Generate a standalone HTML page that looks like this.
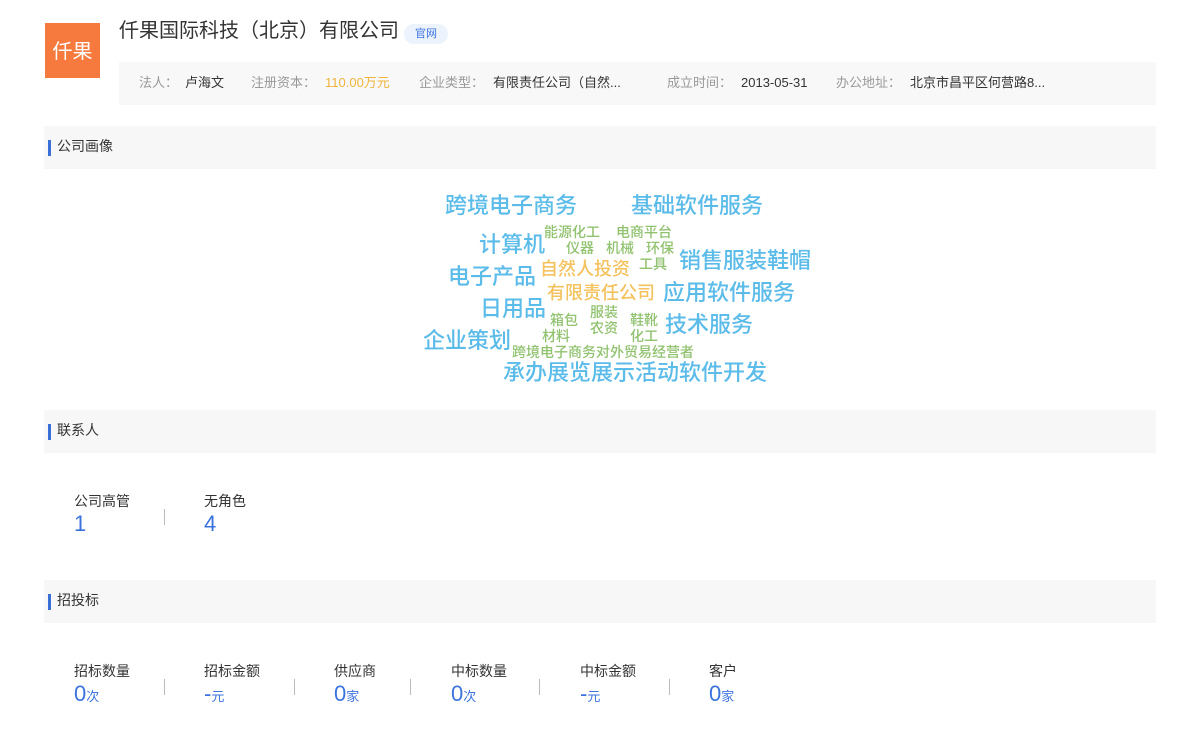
<!DOCTYPE html>
<html><head><meta charset="utf-8"><style>
*{margin:0;padding:0;box-sizing:border-box}
body{width:1200px;height:752px;background:#fff;position:relative;overflow:hidden;font-family:"Liberation Sans","Noto Sans CJK SC",sans-serif;color:#333}
.a{position:absolute;white-space:nowrap;line-height:1}
.logo{position:absolute;left:45px;top:23px;width:55px;height:55px;background:#f67a3e;color:#fff;font-size:20px;line-height:58px;text-align:center}
.info{position:absolute;left:119px;top:62px;width:1037px;height:43px;background:#f8f8f9}
.sec{position:absolute;left:44px;width:1112px;height:43px;background:#f7f7f7}
.sec span{position:absolute;left:4px;top:14px;width:3px;height:16px;background:#3a6fd8}
.sec b{position:absolute;left:13px;top:12px;font-weight:normal;font-size:14px;color:#333;line-height:16px}
.lb{color:#999;font-size:13px}
.vl{color:#333;font-size:13px}
.bl{color:#5bbbe9;font-weight:500}.gr{color:#91c26f;font-weight:500}.or{color:#f4c25e;font-weight:500}
.sl{position:absolute;font-size:14px;color:#333;line-height:1}
.sn{position:absolute;font-size:22px;color:#3b73de;line-height:1}
.sn small{font-size:13px}
.dv{position:absolute;width:1px;height:16px;background:#bbb}
</style></head><body>
<div class="logo">仟果</div>
<div class="a" style="left:119px;top:21px;font-size:20px;color:#333">仟果国际科技（北京）有限公司</div>
<div class="a" style="left:404px;top:24px;width:44px;height:20px;border-radius:10px;background:#edf3fd;color:#3b73de;font-size:11px;line-height:20px;text-align:center">官网</div>
<div class="info"></div>
<div class="a lb" style="left:139px;top:76px">法人：</div>
<div class="a vl" style="left:185px;top:76px">卢海文</div>
<div class="a lb" style="left:251px;top:76px">注册资本：</div>
<div class="a vl" style="left:325px;top:76px;color:#f0b43c">110.00万元</div>
<div class="a lb" style="left:419px;top:76px">企业类型：</div>
<div class="a vl" style="left:493px;top:76px">有限责任公司（自然...</div>
<div class="a lb" style="left:667px;top:76px">成立时间：</div>
<div class="a vl" style="left:741px;top:76px">2013-05-31</div>
<div class="a lb" style="left:836px;top:76px">办公地址：</div>
<div class="a vl" style="left:910px;top:76px">北京市昌平区何营路8...</div>

<div class="sec" style="top:126px"><span></span><b>公司画像</b></div>

<div class="a bl" style="left:445px;top:195px;font-size:22px">跨境电子商务</div>
<div class="a bl" style="left:631px;top:195px;font-size:22px">基础软件服务</div>
<div class="a gr" style="left:544px;top:225px;font-size:14px">能源化工</div>
<div class="a gr" style="left:616px;top:225px;font-size:14px">电商平台</div>
<div class="a bl" style="left:479px;top:234px;font-size:22px">计算机</div>
<div class="a gr" style="left:566px;top:241px;font-size:14px">仪器</div>
<div class="a gr" style="left:606px;top:241px;font-size:14px">机械</div>
<div class="a gr" style="left:646px;top:241px;font-size:14px">环保</div>
<div class="a gr" style="left:639px;top:257px;font-size:14px">工具</div>
<div class="a bl" style="left:679px;top:250px;font-size:22px">销售服装鞋帽</div>
<div class="a bl" style="left:448px;top:266px;font-size:22px">电子产品</div>
<div class="a or" style="left:540px;top:260px;font-size:18px">自然人投资</div>
<div class="a or" style="left:547px;top:284px;font-size:18px">有限责任公司</div>
<div class="a bl" style="left:663px;top:282px;font-size:22px">应用软件服务</div>
<div class="a bl" style="left:480px;top:298px;font-size:22px">日用品</div>
<div class="a gr" style="left:550px;top:313px;font-size:14px">箱包</div>
<div class="a gr" style="left:542px;top:329px;font-size:14px">材料</div>
<div class="a gr" style="left:590px;top:305px;font-size:14px">服装</div>
<div class="a gr" style="left:590px;top:321px;font-size:14px">农资</div>
<div class="a gr" style="left:630px;top:313px;font-size:14px">鞋靴</div>
<div class="a gr" style="left:630px;top:329px;font-size:14px">化工</div>
<div class="a bl" style="left:665px;top:314px;font-size:22px">技术服务</div>
<div class="a bl" style="left:423px;top:330px;font-size:22px">企业策划</div>
<div class="a gr" style="left:512px;top:345px;font-size:14px">跨境电子商务对外贸易经营者</div>
<div class="a bl" style="left:503px;top:362px;font-size:22px">承办展览展示活动软件开发</div>

<div class="sec" style="top:410px"><span></span><b>联系人</b></div>
<div class="sl" style="left:74px;top:494px">公司高管</div>
<div class="sn" style="left:74px;top:513px">1</div>
<div class="dv" style="left:164px;top:509px"></div>
<div class="sl" style="left:204px;top:494px">无角色</div>
<div class="sn" style="left:204px;top:513px">4</div>

<div class="sec" style="top:580px"><span></span><b>招投标</b></div>
<div class="sl" style="left:74px;top:664px">招标数量</div>
<div class="sn" style="left:74px;top:683px">0<small>次</small></div>
<div class="dv" style="left:164px;top:679px"></div>
<div class="sl" style="left:204px;top:664px">招标金额</div>
<div class="sn" style="left:204px;top:683px">-<small>元</small></div>
<div class="dv" style="left:294px;top:679px"></div>
<div class="sl" style="left:334px;top:664px">供应商</div>
<div class="sn" style="left:334px;top:683px">0<small>家</small></div>
<div class="dv" style="left:410px;top:679px"></div>
<div class="sl" style="left:451px;top:664px">中标数量</div>
<div class="sn" style="left:451px;top:683px">0<small>次</small></div>
<div class="dv" style="left:539px;top:679px"></div>
<div class="sl" style="left:580px;top:664px">中标金额</div>
<div class="sn" style="left:580px;top:683px">-<small>元</small></div>
<div class="dv" style="left:669px;top:679px"></div>
<div class="sl" style="left:709px;top:664px">客户</div>
<div class="sn" style="left:709px;top:683px">0<small>家</small></div>
</body></html>
